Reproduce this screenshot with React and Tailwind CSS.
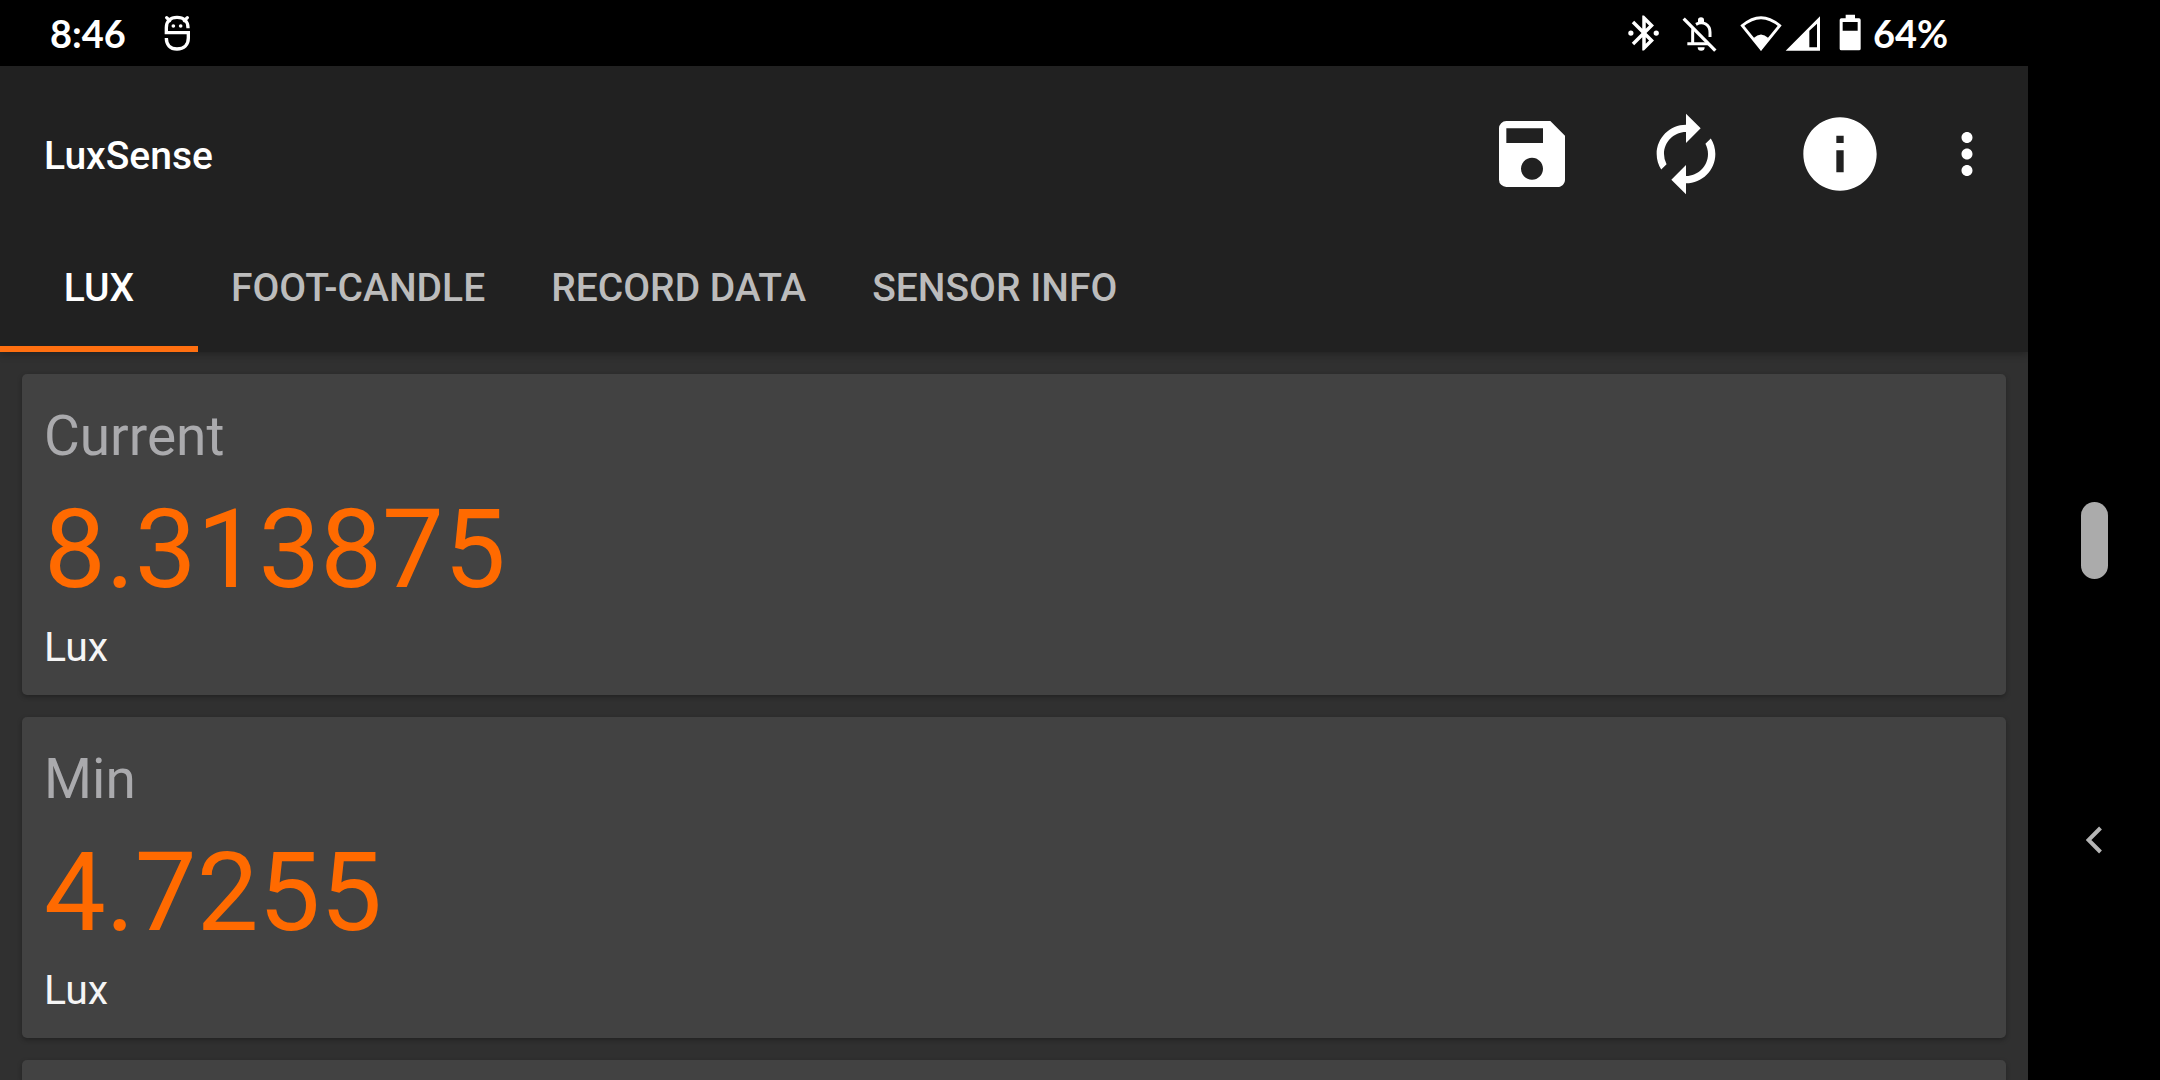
import { useState } from 'react';
import { MdSave, MdAutorenew, MdInfo, MdMoreVert } from 'react-icons/md';

const tabs = ['Lux', 'Foot-candle', 'Record data', 'Sensor info'];

const readings = [
  { label: 'Current', value: '8.313875', unit: 'Lux' },
  { label: 'Min', value: '4.7255', unit: 'Lux' },
];

const NotificationIcon = () => (
  <svg viewBox="490 40 84 120" className="w-[28px] h-[40px]" fill="none" stroke="white" strokeWidth="10">
    <path d="M565 86V84C565 65 552 53 532 53C512 53 500 65 500 84V99H566V115C566 135 553 148 532 148C511 148 500 135 500 115" />
    <path d="M501 54l9 9M563 54l-9 9" strokeLinecap="round" />
    <circle cx="521" cy="79" r="5.500" fill="white" stroke="none" />
    <circle cx="543" cy="79" r="5.500" fill="white" stroke="none" />
  </svg>
);

const BluetoothIcon = () => (
  <svg viewBox="0 0 24 24" className="w-[42px] h-[42px]" fill="white">
    <path d="M17.71 7.71L12 2h-1v7.59L6.41 5 5 6.41 10.59 12 5 17.59 6.41 19 11 14.41V22h1l5.71-5.71-4.3-4.29 4.3-4.29zM13 5.83l1.88 1.88L13 9.59V5.83zm1.88 10.46L13 18.17v-3.76l1.88 1.88z" />
    <circle cx="4.500" cy="12" r="1.5" />
    <circle cx="19" cy="12" r="1.5" />
  </svg>
);

const BellOffIcon = () => (
  <svg viewBox="240 40 120 120" className="w-[40px] h-[40px]" fill="none" stroke="white" strokeWidth="9">
    <path d="M262 132H326M278 131V94Q278 88 280 84M288 74C310 62 330 76 330 98V112" />
    <path d="M251 57L346 153" strokeWidth="10" />
    <path d="M294 68V61A9 8 0 0 1 312 61V68ZM293 143H314A10 10 0 0 1 293 143Z" fill="white" stroke="none" />
  </svg>
);

const WifiIcon = () => (
  <svg viewBox="422 40 126 120" className="w-[42px] h-[40px]">
    <path d="M429 78Q485 30 541 78L485 147Z" fill="none" stroke="white" strokeWidth="8.500" />
    <path d="M463 115Q485 94 507 115L485 153Z" fill="white" />
  </svg>
);

const SignalIcon = () => (
  <svg viewBox="555 40 108 120" className="w-[36px] h-[40px]" fill="white" fillRule="evenodd">
    <path d="M557 153L660 50V153ZM628 93V143H651V72Z" />
  </svg>
);

const BatteryIcon = () => (
  <svg viewBox="718 40 66 120" className="w-[22px] h-[40px]" fill="white" fillRule="evenodd">
    <path d="M738 45H766V56H778Q783 56 783 61V147Q783 152 778 152H725Q720 152 720 147V61Q720 56 725 56H738ZM729 67V93H774V67Z" />
  </svg>
);

const StatusBar = () => (
  <div className="flex h-[66px] items-center justify-between bg-black pl-[50px] pr-[77px] font-['Lato',sans-serif] text-[38px] font-bold text-white">
    <div className="flex items-center">
      <span className="w-[113px]">8:46</span>
      <NotificationIcon />
    </div>
    <div className="flex items-center">
      <BluetoothIcon />
      <div className="ml-[15px] mr-[20px]">
        <BellOffIcon />
      </div>
      <WifiIcon />
      <div className="ml-[3px] mr-[18px]">
        <SignalIcon />
      </div>
      <BatteryIcon />
      <span className="ml-[12px] w-[78px]">64%</span>
    </div>
  </div>
);

const ActionButton = ({ label, children }) => (
  <button type="button" aria-label={label} className="flex h-[132px] w-[154px] items-center justify-center text-[88px]">
    {children}
  </button>
);

const ReadingCard = ({ label, value, unit }) => (
  <section className="h-[321px] shrink-0 rounded-[5px] bg-[#424242] px-[22px] pt-[26px] shadow-[0_2px_5px_rgba(0,0,0,0.3)]">
    <h2 className="text-[55px] leading-[73px] text-[#aaaaad]">{label}</h2>
    <p className="text-[110px] leading-[154px] text-[#ff6a00]">{value}</p>
    <p className="text-[41px] leading-[40px] text-[#f5f5f5]">{unit}</p>
  </section>
);

const App = () => {
  const [activeTab, setActiveTab] = useState('Lux');

  return (
    <div className="flex h-screen overflow-hidden bg-black font-['Roboto',sans-serif]">
      <div className="flex min-w-0 flex-1 flex-col">
        <StatusBar />

        <header className="relative bg-[#212121] pt-[22px] text-white shadow-[0_2px_8px_rgba(0,0,0,0.3)]">
          <div className="flex items-center pl-[44px] pr-[11px]">
            <h1 className="flex-1 pt-[4px] text-[39px] font-medium">LuxSense</h1>
            <ActionButton label="Save"><MdSave /></ActionButton>
            <ActionButton label="Reset"><MdAutorenew /></ActionButton>
            <ActionButton label="Info"><MdInfo /></ActionButton>
            <button type="button" aria-label="More options" className="flex h-[132px] w-[100px] items-center justify-center text-[66px]">
              <MdMoreVert />
            </button>
          </div>
          <nav className="flex">
            {tabs.map((tab) => (
              <button
                key={tab}
                type="button"
                onClick={() => setActiveTab(tab)}
                className={`h-[132px] min-w-[198px] border-b-[6px] px-[33px] pt-[10px] text-[39px] font-medium uppercase ${
                  tab === activeTab ? 'border-b-[#ff6f10] text-white' : 'border-b-transparent text-[#bcbcbc]'
                }`}
              >
                {tab}
              </button>
            ))}
          </nav>
        </header>

        <main className="flex min-h-0 flex-1 flex-col gap-[22px] overflow-hidden bg-[#303030] px-[22px] pt-[22px]">
          {readings.map((reading) => (
            <ReadingCard key={reading.label} {...reading} />
          ))}
          <section className="flex-1 rounded-t-[5px] bg-[#424242] shadow-[0_2px_5px_rgba(0,0,0,0.3)]" />
        </main>
      </div>

      {/* system navigation */}
      <div className="flex w-[132px] flex-col items-center justify-center">
        <div className="h-[300px]" />
        <button type="button" aria-label="Home" className="flex h-[300px] w-full items-center justify-center">
          <span className="h-[77px] w-[27px] rounded-full bg-[#ababab]" />
        </button>
        <button type="button" aria-label="Back" className="flex h-[300px] w-full items-center justify-center">
          <svg viewBox="0 0 16 28" className="h-[28px] w-[16px]" fill="none" stroke="#b5b5b5" strokeWidth="4">
            <path d="M14.500 2L2.500 14L14.500 26" />
          </svg>
        </button>
      </div>
    </div>
  );
};

export default App;
